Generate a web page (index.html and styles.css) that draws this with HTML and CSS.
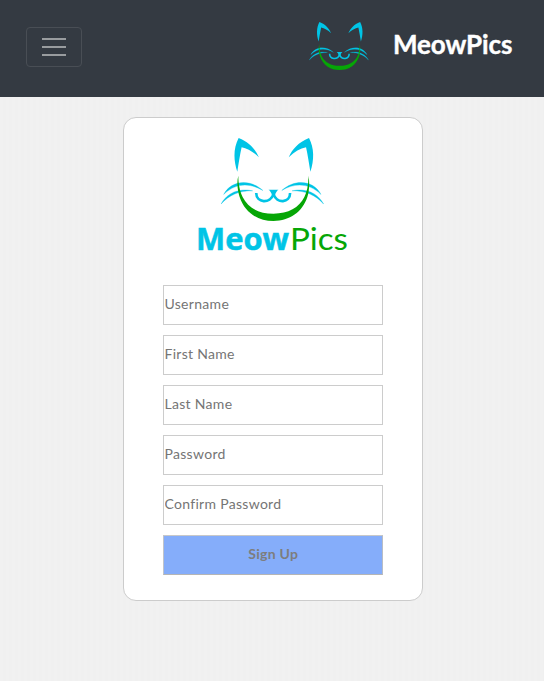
FILE: index.html
```html
<!DOCTYPE html>
<html lang="en">
<head>
<meta charset="utf-8">
<title>MeowPics</title>
<link rel="stylesheet" href="styles.css">
</head>
<body>
<svg width="0" height="0" class="defs">
  <symbol id="cat" viewBox="93 39 310 250">
    <g fill="#00c4e6">
      <path id="ear" d="M146 39C178 52 196 72 207 97C190 80 172 71 155 67C150 90 146 115 142 141C130 105 130 70 146 39Z"/>
      <use href="#ear" transform="matrix(-1 0 0 1 504 0)"/>
      <g id="whiskers" stroke="#00c4e6" stroke-width="1">
        <path d="M101 209C122 168 178 160 219 197C178 173 136 175 101 209Z"/>
        <path d="M93 238C110 205 147 189 188 198C151 197 117 210 93 238Z"/>
      </g>
      <use href="#whiskers" transform="matrix(-1 0 0 1 495 0)"/>
      <path d="M236 195H266Q259 199 255 213H247Q243 199 236 195Z"/>
    </g>
    <path d="M199 205C199 235 241 238 251 208C261 238 301 235 301 205" fill="none" stroke="#00c4e6" stroke-width="8"/>
    <path d="M145 153C139 175 144 200 149 217C164 262 202 289 251 289C300 289 338 262 353 217C358 200 361 175 356 153C357 180 352 200 344 217C328 249 296 267 251 267C206 267 174 249 158 217C150 200 145 180 145 153Z" fill="#06a606"/>
  </symbol>
</svg>
<header class="navbar">
  <button class="toggler" aria-label="Menu"><span></span><span></span><span></span></button>
  <a class="brand">
    <svg class="brand-cat"><use href="#cat"/></svg>
    <span class="brand-name">MeowPics</span>
  </a>
</header>
<main class="card">
  <svg class="card-cat"><use href="#cat"/></svg>
  <svg class="wordmark" viewBox="0 0 152 30">
    <text class="meow" x="-1" y="26" textLength="93" lengthAdjust="spacingAndGlyphs">Meow</text>
    <text class="pics" x="93" y="26" textLength="58" lengthAdjust="spacingAndGlyphs">Pics</text>
  </svg>
  <form class="form">
    <input type="text" placeholder="Username">
    <input type="text" placeholder="First Name">
    <input type="text" placeholder="Last Name">
    <input type="password" placeholder="Password">
    <input type="password" placeholder="Confirm Password">
    <button type="button" class="submit">Sign Up</button>
  </form>
</main>
</body>
</html>
```
FILE: styles.css
```css
* { box-sizing: border-box; }
body {
  margin: 0;
  min-height: 681px;
  background: repeating-linear-gradient(90deg, #f1f1f1 0 3px, #f0f0f0 3px 6px);
  font-family: Lato, "Open Sans", sans-serif;
}
.defs { position: absolute; }
.navbar {
  height: 97px;
  padding: 0 31px 3px 26px;
  display: flex;
  align-items: center;
  justify-content: space-between;
  background: #343a42;
}
.toggler {
  width: 56px;
  height: 40px;
  padding: 0;
  display: flex;
  flex-direction: column;
  align-items: center;
  justify-content: center;
  gap: 6px;
  background: none;
  border: 1px solid #494e55;
  border-radius: 4px;
}
.toggler span { width: 24px; height: 2px; background: #999c9f; }
.brand { display: flex; align-items: center; }
.brand-cat { width: 60px; height: 48px; margin: 0 24px 2px 0; }
.brand-name {
  width: 120px;
  color: #fff;
  font-size: 26px;
  font-weight: 700;
  line-height: 34px;
  letter-spacing: -0.1px;
  white-space: nowrap;
  margin-bottom: 7px;
  -webkit-text-stroke: 0.4px #fff;
}
.card {
  width: 300px;
  height: 484px;
  margin: 20px 0 0 123px;
  padding: 20px 39px 0;
  display: flex;
  flex-direction: column;
  align-items: center;
  background: #fff;
  border: 1px solid #ccc;
  border-radius: 13px;
}
.card-cat { width: 103px; height: 83px; margin-right: 2px; flex: none; }
.wordmark { width: 152px; height: 30px; margin-top: 3px; flex: none; overflow: visible; }
.meow { font: 700 30px "Open Sans", sans-serif; fill: #00c4e6; stroke: #00c4e6; stroke-width: 0.5px; }
.pics { font: 400 31px Lato, sans-serif; fill: #06a606; }
.form { width: 220px; margin-top: 31px; display: flex; flex-direction: column; gap: 10px; }
.form input, .submit {
  width: 220px;
  height: 40px;
  padding: 0 0 4px 0.5px;
  border: 1px solid #ccc;
  border-radius: 0;
  background: #fff;
  font-family: inherit;
  font-size: 14px;
  letter-spacing: 0.3px;
}
.form input::placeholder { color: #757575; opacity: 1; }
.submit {
  background: #85adfa;
  color: #7d7d7d;
  font-weight: 700;
  border-color: #c8c8c8 #b8bdc5 #b5b5b5 #c0c4cb;
}
```
